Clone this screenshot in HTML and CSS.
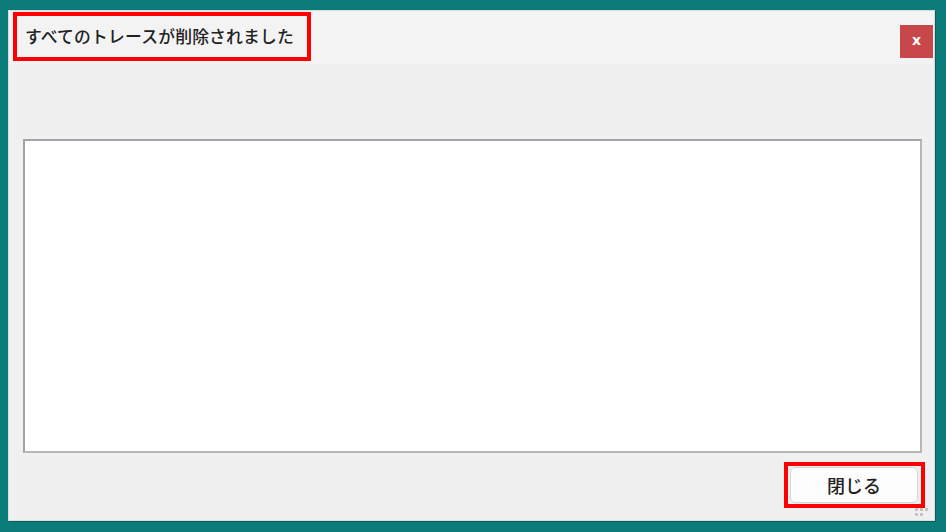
FILE: index.html
```html
<!DOCTYPE html>
<html lang="ja">
<head>
<meta charset="utf-8">
<title>トレース削除</title>
<link rel="stylesheet" href="styles.css">
</head>
<body>
<div class="window">
  <div class="titlebar">
    <div class="title-mark">
      <span class="title-text">すべてのトレースが削除されました</span>
    </div>
    <button class="close" type="button" aria-label="閉じる">x</button>
  </div>
  <div class="content">
    <div class="log"></div>
    <div class="actions">
      <div class="btn-mark">
        <button class="btn" type="button">閉じる</button>
      </div>
    </div>
  </div>
  <div class="grip">
    <span></span><span></span><span></span>
    <span class="off"></span><span></span><span></span>
  </div>
</div>
</body>
</html>
```

FILE: styles.css
```css
html, body {
  margin: 0;
  padding: 0;
}

body {
  width: 946px;
  height: 532px;
  background: #0b7b79;
  overflow: hidden;
  font-family: "Noto Sans CJK JP", "Noto Sans", sans-serif;
}

.window {
  position: relative;
  box-sizing: border-box;
  margin: 10px 0 0 8px;
  width: 927px;
  height: 511px;
  background: #f0f0f0;
  border: 1px solid #d8dcdc;
  box-shadow: 1px 1px 0 #0a5f5d;
  display: flex;
  flex-direction: column;
}

.titlebar {
  height: 52px;
  background: #f3f3f3;
  display: flex;
  align-items: flex-start;
  justify-content: space-between;
  padding: 1px 1px 0 4px;
}

.title-mark {
  box-sizing: border-box;
  width: 298px;
  height: 49px;
  border: 4px solid #ff0000;
  display: flex;
  align-items: center;
  padding: 0 0 2px 8px;
}

.title-text {
  font-size: 16.8px;
  font-weight: 500;
  color: #222222;
  letter-spacing: 0.2px;
}

.close {
  margin-top: 13px;
  width: 33px;
  height: 33px;
  border: none;
  background: #c8474b;
  color: #ffffff;
  font-family: "DejaVu Sans", sans-serif;
  font-weight: bold;
  font-size: 14px;
  line-height: 1;
  padding: 0 0 3px;
}

.content {
  flex: 1;
  display: flex;
  flex-direction: column;
  padding: 75px 12px 0 14px;
}

.log {
  box-sizing: border-box;
  width: 899px;
  height: 314px;
  background: #ffffff;
  border: 2px solid #a0a3a9;
  border-right-color: #b5b7bb;
  border-bottom-color: #b5b7bb;
}

.actions {
  display: flex;
  justify-content: flex-end;
  padding-top: 9px;
}

.btn-mark {
  box-sizing: border-box;
  width: 141px;
  height: 46px;
  border: 4px solid #ff0000;
  padding: 1px 3px 0 2px;
  margin-right: -3px;
}

.btn {
  box-sizing: border-box;
  width: 128px;
  height: 36px;
  background: #fdfdfd;
  border: 1px solid #d4d4d4;
  border-radius: 5px;
  font-family: "Noto Sans CJK JP", "Noto Sans", sans-serif;
  font-size: 18px;
  font-weight: 500;
  color: #222222;
  padding: 0;
}

.grip {
  position: absolute;
  right: 6px;
  bottom: 4px;
  display: grid;
  grid-template-columns: repeat(3, 3px);
  gap: 2px;
  direction: rtl;
}

.grip span {
  width: 3px;
  height: 3px;
  background: #c4c4c4;
}

.grip .off {
  background: transparent;
}
```
